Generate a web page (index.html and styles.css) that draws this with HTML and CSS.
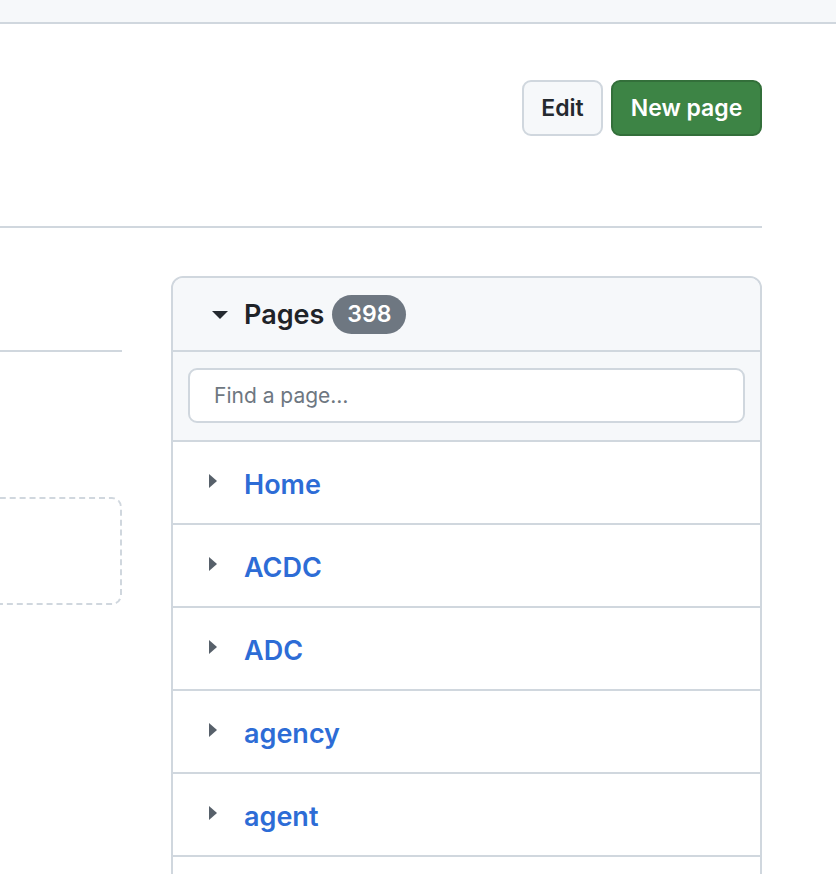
FILE: index.html
```html
<!DOCTYPE html>
<html>
<head>
<meta charset="utf-8">
<link rel="stylesheet" href="styles.css">
</head>
<body>
<div class="topbar"></div>
<div class="page">
  <div class="head">
    <button class="btn btn-default">Edit</button>
    <button class="btn btn-primary">New page</button>
  </div>
  <div class="layout">
    <div class="main">
      <div class="main-title"></div>
      <div class="dashed"></div>
    </div>
    <div class="sidebar">
      <div class="side-head">
        <span class="caret-down"></span>
        <span class="side-title">Pages</span>
        <span class="counter">398</span>
      </div>
      <div class="side-search">
        <div class="input">Find a page…</div>
      </div>
      <ul class="pages">
        <li class="page-row"><span class="caret-right"></span><a href="#">Home</a></li>
        <li class="page-row"><span class="caret-right"></span><a href="#">ACDC</a></li>
        <li class="page-row"><span class="caret-right"></span><a href="#">ADC</a></li>
        <li class="page-row"><span class="caret-right"></span><a href="#">agency</a></li>
        <li class="page-row"><span class="caret-right"></span><a href="#">agent</a></li>
      </ul>
    </div>
  </div>
</div>
</body>
</html>
```
FILE: styles.css
```css
* { box-sizing: border-box; }
html, body { margin: 0; padding: 0; background: #fff; overflow: hidden; }
body {
  font-family: Inter, "Liberation Sans", Arial, sans-serif;
  color: #24292f;
  height: 874px;
}
.topbar {
  height: 24px;
  background: #f6f8fa;
  border-bottom: 2px solid #d0d7de;
}
.page { width: 762px; }
.head {
  display: flex;
  justify-content: flex-end;
  gap: 8px;
  padding: 56px 0 90px;
  border-bottom: 2px solid #d0d7de;
}
.btn {
  height: 56px;
  border-radius: 9px;
  border: 2px solid #d0d7de;
  font-family: inherit;
  font-size: 23px;
  font-weight: 600;
  padding: 0;
  line-height: 1;
}
.btn-default { background: #f6f8fa; color: #24292f; width: 81px; }
.btn-primary { background: #3d8445; color: #fff; border-color: #336f3a; width: 151px; }
.layout {
  display: grid;
  grid-template-columns: 122px 591px;
  column-gap: 49px;
  margin-top: 48px;
}
.main-title {
  height: 76px;
  border-bottom: 2px solid #d0d7de;
}
.dashed {
  margin-top: 145px;
  margin-left: -40px;
  height: 108px;
  border: 2px dashed #d0d7de;
  border-radius: 10px;
}
.sidebar {
  border: 2px solid #d0d7de;
  border-radius: 12px;
  overflow: hidden;
  height: 620px;
}
.side-head {
  height: 74px;
  background: #f6f8fa;
  border-bottom: 2px solid #d0d7de;
  display: flex;
  align-items: center;
  padding-left: 39px;
}
.caret-down {
  width: 0; height: 0;
  border-left: 8px solid transparent;
  border-right: 8px solid transparent;
  border-top: 8px solid #24292f;
  margin-right: 16px;
  margin-top: 2px;
}
.side-title {
  font-size: 27px;
  font-weight: 600;
  color: #1f2328;
}
.counter {
  margin-left: 8px;
  height: 39px;
  width: 74px;
  border-radius: 20px;
  background: #6e7781;
  color: #fff;
  font-size: 23px;
  font-weight: 600;
  display: flex;
  align-items: center;
  justify-content: center;
}
.side-search {
  background: #f6f8fa;
  padding: 16px 15px 17px;
  border-bottom: 2px solid #d0d7de;
}
.input {
  height: 55px;
  background: #fff;
  border: 2px solid #d0d7de;
  border-radius: 9px;
  padding: 0 24px;
  display: flex;
  align-items: center;
  font-size: 21px;
  color: #6e7781;
}
.pages { list-style: none; margin: 0; padding: 0; }
.page-row {
  height: 83px;
  border-bottom: 2px solid #d0d7de;
  display: flex;
  align-items: center;
  padding-left: 36px;
  padding-top: 4px;
}
.caret-right {
  width: 0; height: 0;
  border-top: 7px solid transparent;
  border-bottom: 7px solid transparent;
  border-left: 8px solid #57606a;
  margin-right: 27px;
  margin-top: -8px;
}
.page-row a {
  font-size: 27px;
  font-weight: 600;
  color: #2d6cd6;
  text-decoration: none;
}
```
